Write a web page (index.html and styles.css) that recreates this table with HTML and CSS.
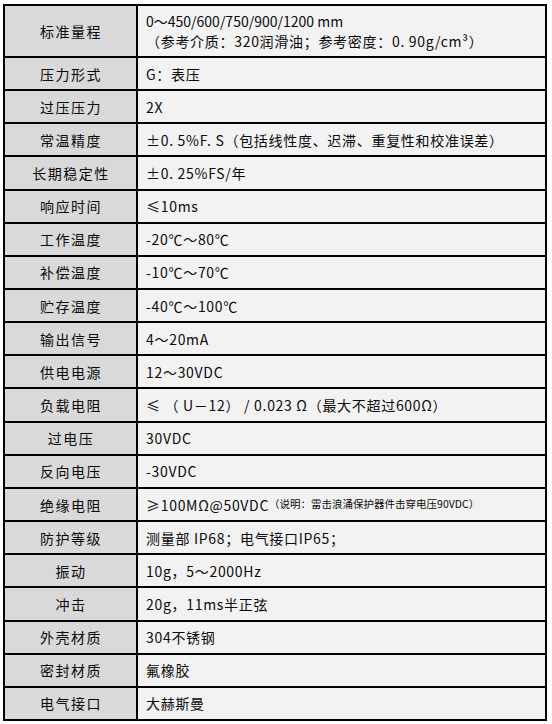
FILE: index.html
```html
<!DOCTYPE html>
<html lang="zh-CN">
<head>
<meta charset="utf-8">
<title>技术参数</title>
<link rel="stylesheet" href="styles.css">
</head>
<body>
<div class="spec">
  <div class="k">标准量程</div>
  <div class="v v2"><span class="l1">0～450/600/750/900/1200 mm</span><span class="l2">（参考介质：320润滑油；参考密度：0. 90g/cm³）</span></div>
  <div class="k">压力形式</div><div class="v">G：表压</div>
  <div class="k">过压压力</div><div class="v">2X</div>
  <div class="k">常温精度</div><div class="v">±0. 5%F. S（包括线性度、迟滞、重复性和校准误差）</div>
  <div class="k">长期稳定性</div><div class="v">±0. 25%FS/年</div>
  <div class="k">响应时间</div><div class="v">≤10ms</div>
  <div class="k">工作温度</div><div class="v">-20℃～80℃</div>
  <div class="k">补偿温度</div><div class="v">-10℃～70℃</div>
  <div class="k">贮存温度</div><div class="v">-40℃～100℃</div>
  <div class="k">输出信号</div><div class="v">4～20mA</div>
  <div class="k">供电电源</div><div class="v">12～30VDC</div>
  <div class="k">负载电阻</div><div class="v">≤ （ U－12） / 0.023 Ω（最大不超过600Ω）</div>
  <div class="k">过电压</div><div class="v">30VDC</div>
  <div class="k">反向电压</div><div class="v">-30VDC</div>
  <div class="k">绝缘电阻</div><div class="v">≥100MΩ@50VDC<span class="note">（说明：雷击浪涌保护器件击穿电压90VDC）</span></div>
  <div class="k">防护等级</div><div class="v">测量部 IP68；电气接口IP65；</div>
  <div class="k">振动</div><div class="v">10g，5～2000Hz</div>
  <div class="k">冲击</div><div class="v">20g，11ms半正弦</div>
  <div class="k">外壳材质</div><div class="v">304不锈钢</div>
  <div class="k">密封材质</div><div class="v">氟橡胶</div>
  <div class="k">电气接口</div><div class="v">大赫斯曼</div>
</div>
</body>
</html>
```

FILE: styles.css
```css
html, body {
  margin: 0;
  padding: 0;
  background: #ffffff;
}
body {
  padding: 4px 0 0 3px;
  font-family: "Noto Sans CJK SC", "Noto Sans", sans-serif;
  font-size: 14px;
  color: #0a0a0a;
}
.spec {
  box-sizing: border-box;
  width: 544px;
  height: 717px;
  padding: 2px;
  background: #000;
  display: grid;
  grid-template-columns: 131px 1fr;
  grid-template-rows: 50px repeat(20, 1fr);
  gap: 2px;
}
.k {
  background: #d9d9d9;
  display: flex;
  align-items: center;
  justify-content: center;
  letter-spacing: 1.5px;
  padding-left: 1px;
  line-height: 1;
  white-space: nowrap;
}
.v {
  background: #f2f2f2;
  display: flex;
  align-items: center;
  padding-left: 8px;
  letter-spacing: 0.7px;
  line-height: 1;
  white-space: nowrap;
}
.v2 {
  flex-direction: column;
  align-items: flex-start;
  justify-content: center;
  line-height: 20px;
}
.l1, .l2 {
  display: block;
}
.l1 {
  letter-spacing: 0;
}
.note {
  font-size: 10.5px;
  letter-spacing: 0;
}
```
